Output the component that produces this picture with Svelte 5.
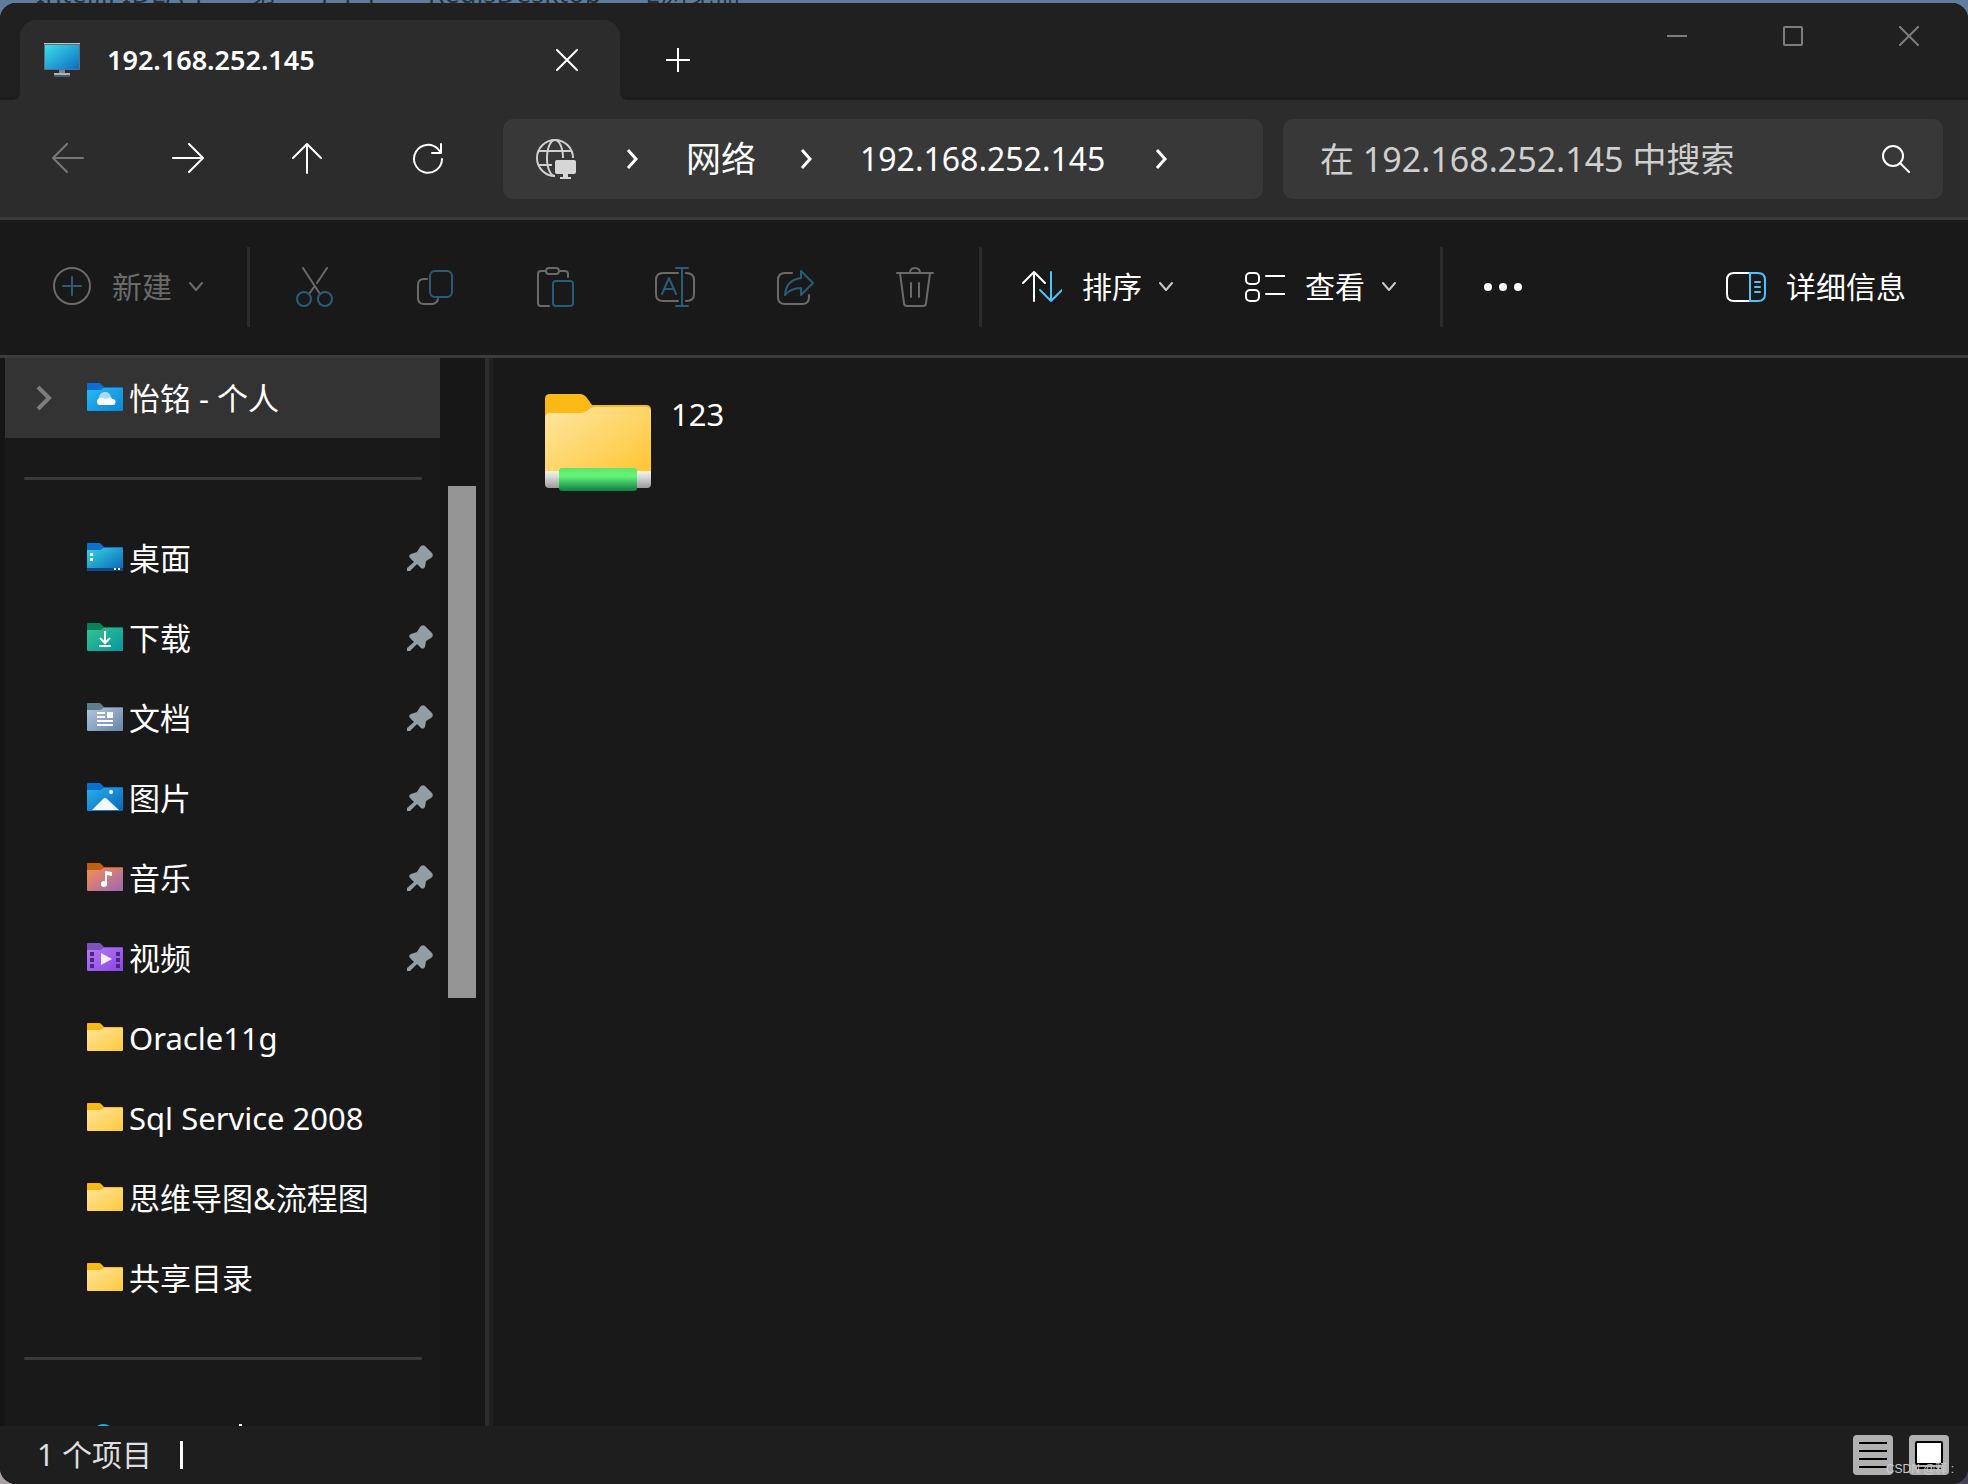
<script lang="ts">
	type Place = { name: string; kind: string; top: string; from: string; to: string; pinned: boolean };

	const places: Place[] = [
		{ name: '桌面', kind: 'desktop', top: '#0f6fcb', from: '#33d6e4', to: '#0b62b8', pinned: true },
		{ name: '下载', kind: 'downloads', top: '#0b7f5b', from: '#33c58a', to: '#0595a5', pinned: true },
		{ name: '文档', kind: 'documents', top: '#5f7c8c', from: '#b3c6dd', to: '#6685a8', pinned: true },
		{ name: '图片', kind: 'pictures', top: '#0a6fd0', from: '#27b1ec', to: '#0866b8', pinned: true },
		{ name: '音乐', kind: 'music', top: '#c0600f', from: '#f78d53', to: '#9c67b5', pinned: true },
		{ name: '视频', kind: 'videos', top: '#7c52bd', from: '#b57bf5', to: '#8a44e6', pinned: true },
		{ name: 'Oracle11g', kind: 'folder', top: '#fbb917', from: '#ffe49a', to: '#ffc93d', pinned: false },
		{ name: 'Sql Service 2008', kind: 'folder', top: '#fbb917', from: '#ffe49a', to: '#ffc93d', pinned: false },
		{ name: '思维导图&流程图', kind: 'folder', top: '#fbb917', from: '#ffe49a', to: '#ffc93d', pinned: false },
		{ name: '共享目录', kind: 'folder', top: '#fbb917', from: '#ffe49a', to: '#ffc93d', pinned: false }
	];

	const personal: Place = {
		name: '怡铭 - 个人',
		kind: 'cloud',
		top: '#0a6fd0',
		from: '#29b9f2',
		to: '#0a86d8',
		pinned: false
	};

	const files = ['123'];

	const behind = ['IntelliJ IDEA 1', '第', 'P P P', 'RedisDesktop', 'E浏览器'];
</script>

{#snippet folder(p: Place, id: string)}
	<svg class="folder" width="36" height="28" viewBox="0 0 36 28" aria-hidden="true">
		<defs>
			<linearGradient {id} x1="0" y1="0" x2="1" y2="1">
				<stop offset="0" stop-color={p.from} />
				<stop offset="1" stop-color={p.to} />
			</linearGradient>
		</defs>
		<path d="M0 1q0-1 1-1h11q2 0 3 2l2 2h18q1 0 1 1v12H0z" fill={p.top} />
		<path d="M0 7h13q2 0 3-2h19q1 0 1 1v21q0 1-1 1H1q-1 0-1-1z" fill="url(#{id})" />
		{#if p.kind === 'cloud'}
			<path d="M12 16a6 6 0 0 1 12-2l3 4z" fill="#a8dbf7" />
			<path d="M12 22a4 4 0 0 1 0-7q3-1 6 1l5-1q2 1 3 1a3 3 0 0 1-1 6z" fill="#fff" />
		{:else if p.kind === 'desktop'}
			<path d="M0 25h36v2q0 1-1 1H1q-1 0-1-1z" fill="#0d4a80" />
			<path d="M3 10h3v3H3zM3 15h3v3H3zM27 25h2v2h-2zM31 25h2v2h-2z" fill="#fff" />
		{:else if p.kind === 'downloads'}
			<path d="M18 8v12M13 15l5 5 5-5M12 23h12" fill="none" stroke="#fff" stroke-width="2" />
		{:else if p.kind === 'documents'}
			<path d="M10 9h8v2h-8zM10 13h8v2h-8zM20 9h6v6h-6zM10 17h16v2H10zM10 21h16v2H10z" fill="#fff" />
		{:else if p.kind === 'pictures'}
			<path d="M5 27L16 16q2-2 4 0l12 11z" fill="#f4f9ff" />
			<circle cx="24" cy="9" r="2" fill="#fff" />
		{:else if p.kind === 'music'}
			<circle cx="17" cy="21" r="3" fill="#fff" />
			<path d="M18 21V8l7 1v4l-5-1v9z" fill="#fff" />
		{:else if p.kind === 'videos'}
			<path
				d="M3 9h4v4H3zM3 15h4v4H3zM3 21h4v4H3zM29 9h4v4h-4zM29 15h4v4h-4zM29 21h4v4h-4z"
				fill="#4a2a78"
			/>
			<path d="M14 10v12l11-6z" fill="#f3ecfc" />
		{/if}
	</svg>
{/snippet}

{#snippet down()}
	<svg class="line down" width="14" height="10" viewBox="0 0 14 10" aria-hidden="true">
		<path d="M1 1l6 7 6-7" />
	</svg>
{/snippet}

{#snippet crumb()}
	<svg class="crumb" width="12" height="22" viewBox="0 0 12 22" aria-hidden="true">
		<path d="M2 2l8 9-8 9" />
	</svg>
{/snippet}

<div class="desktop">
	<div class="behind" aria-hidden="true">
		{#each behind as label}
			<span>{label}</span>
		{/each}
	</div>

	<main class="window">
		<header class="titlebar">
			<div class="tab">
				<svg width="36" height="34" viewBox="0 0 36 34" aria-hidden="true">
					<defs>
						<linearGradient id="screen" x1="0" y1="0" x2="1" y2="1">
							<stop offset="0" stop-color="#3ce0ea" />
							<stop offset="1" stop-color="#0b6cc4" />
						</linearGradient>
					</defs>
					<rect width="36" height="27" rx="1" fill="#5c7180" />
					<path d="M0 0h36v1H0z" fill="#b9c4cc" />
					<rect x="1" y="2" width="34" height="24" fill="url(#screen)" />
					<path d="M15 27h6v4h-6z" fill="#7a8791" />
					<path d="M10 30h16v2H10z" fill="#aab4bb" />
					<path d="M10 32h16v2H10z" fill="#4e5a63" />
				</svg>
				<h1>192.168.252.145</h1>
				<button type="button" class="close-tab" aria-label="关闭标签页">
					<svg class="line" width="22" height="22" viewBox="0 0 22 22"><path d="M1 1l20 20M21 1L1 21" /></svg>
				</button>
			</div>
			<button type="button" class="new-tab" aria-label="新建标签页">
				<svg class="line" width="24" height="24" viewBox="0 0 24 24"><path d="M12 0v24M0 12h24" /></svg>
			</button>
			<div class="window-controls">
				<button type="button" aria-label="最小化">
					<svg class="line" width="20" height="20" viewBox="0 0 20 20"><path d="M0 10h20" /></svg>
				</button>
				<button type="button" aria-label="最大化">
					<svg class="line" width="20" height="20" viewBox="0 0 20 20"><rect x="1" y="1" width="18" height="18" rx="1" /></svg>
				</button>
				<button type="button" aria-label="关闭">
					<svg class="line" width="20" height="20" viewBox="0 0 20 20"><path d="M0 0l20 20M20 0L0 20" /></svg>
				</button>
			</div>
		</header>

		<div class="navbar">
			<div class="history">
				<button type="button" aria-label="后退" disabled>
					<svg class="line" width="32" height="32" viewBox="0 0 32 32"><path d="M31 15H2M15 1L1 15l14 14" /></svg>
				</button>
				<button type="button" aria-label="前进">
					<svg class="line" width="32" height="32" viewBox="0 0 32 32"><path d="M1 15h29M17 1l14 14-14 14" /></svg>
				</button>
				<button type="button" aria-label="向上">
					<svg class="line" width="32" height="32" viewBox="0 0 32 32"><path d="M15 30V1M1 15L15 1l14 14" /></svg>
				</button>
				<button type="button" aria-label="刷新">
					<svg class="line" width="32" height="32" viewBox="0 0 32 32">
						<path d="M30 16A14 14 0 1 1 26 6l3 4M29 1v9h-9" />
					</svg>
				</button>
			</div>

			<nav class="address" aria-label="地址">
				<svg class="globe" width="40" height="40" viewBox="0 0 40 40" aria-hidden="true">
					<g fill="none" stroke="#cfcfcf" stroke-width="2">
						<path d="M37 19A18 18 0 1 0 19 37" />
						<path d="M27 19C27 8 23 1 19 1S11 8 11 19s4 18 8 18" />
						<path d="M3 12h32M3 26h13" />
					</g>
					<rect x="19" y="21" width="21" height="14" rx="2" fill="#d6d6d6" />
					<path d="M27 35h5v3h3v2H24v-2h3z" fill="#d6d6d6" />
				</svg>
				{@render crumb()}
				<a href="#network">网络</a>
				{@render crumb()}
				<a href="#host">192.168.252.145</a>
				{@render crumb()}
			</nav>

			<label class="search">
				<input type="search" placeholder="在 192.168.252.145 中搜索" aria-label="搜索" />
				<svg class="line" width="28" height="28" viewBox="0 0 28 28" aria-hidden="true">
					<circle cx="11" cy="11" r="10" /><path d="M18 18l9 9" />
				</svg>
			</label>
		</div>

		<div class="toolbar" role="toolbar" aria-label="命令">
			<button type="button" class="command" disabled>
				<svg class="line" width="40" height="40" viewBox="0 0 40 40" aria-hidden="true">
					<circle cx="20" cy="19" r="18" /><path class="blue" d="M20 10v18M11 19h18" />
				</svg>
				<span>新建</span>
				{@render down()}
			</button>
			<span class="divider"></span>
			<div class="tools">
				<button type="button" aria-label="剪切" disabled>
					<svg class="line" width="40" height="40" viewBox="0 0 40 40">
						<path d="M8 1l17 26M32 1L22 16M19 20l-5 7" />
						<circle class="blue" cx="9" cy="32" r="7" /><circle class="blue" cx="30" cy="32" r="7" />
					</svg>
				</button>
				<button type="button" aria-label="复制" disabled>
					<svg class="line" width="40" height="40" viewBox="0 0 40 40">
						<path d="M12 12H9q-6 0-6 6v13q0 6 6 6h7q6 0 7-5" />
						<rect class="blue" x="15" y="4" width="22" height="26" rx="5" />
					</svg>
				</button>
				<button type="button" aria-label="粘贴" disabled>
					<svg class="line" width="40" height="40" viewBox="0 0 40 40">
						<path d="M11 4H6q-3 0-3 3v29q0 3 3 3h8M24 4h6q3 0 3 3v3" />
						<rect x="11" y="1" width="13" height="6" rx="3" />
						<rect class="blue" x="18" y="14" width="20" height="25" rx="3" />
					</svg>
				</button>
				<button type="button" aria-label="重命名" disabled>
					<svg class="line" width="40" height="40" viewBox="0 0 40 40">
						<path d="M23 6H8q-7 0-7 7v14q0 7 7 7h15M31 6q8 0 8 7v14q0 7-8 7" />
						<path class="blue" d="M27 2v37M21 1h12M21 39h12M7 27l7-16 7 16M9 22h10" />
					</svg>
				</button>
				<button type="button" aria-label="共享" disabled>
					<svg class="line" width="40" height="40" viewBox="0 0 40 40">
						<path d="M17 6h-7q-7 0-7 7v17q0 7 7 7h17q7 0 7-7v-2" />
						<path class="blue" d="M26 4l12 12-12 12v-7q-10 0-16 7 1-15 16-17z" />
					</svg>
				</button>
				<button type="button" aria-label="删除" disabled>
					<svg class="line" width="40" height="40" viewBox="0 0 40 40">
						<path d="M2 6h36M5 6l4 30q0 3 3 3h16q3 0 3-3l4-30M15 6q0-5 5-5t5 5M16 16v14M24 16v14" />
					</svg>
				</button>
			</div>
			<span class="divider"></span>
			<div class="menus">
				<button type="button" class="command">
					<svg class="line" width="40" height="40" viewBox="0 0 40 40" aria-hidden="true">
						<path d="M12 34V5M1 16L12 5l11 11" />
						<path class="blue" d="M29 5v29M18 23l11 11 11-11" />
					</svg>
					<span>排序</span>
					{@render down()}
				</button>
				<button type="button" class="command">
					<svg class="line" width="40" height="40" viewBox="0 0 40 40" aria-hidden="true">
						<rect x="1" y="6" width="13" height="11" rx="4" />
						<rect x="1" y="23" width="13" height="11" rx="4" />
						<path d="M21 9h19M21 27h19" />
					</svg>
					<span>查看</span>
					{@render down()}
				</button>
			</div>
			<span class="divider"></span>
			<button type="button" class="more" aria-label="查看更多">
				<svg width="40" height="10" viewBox="0 0 40 10">
					<g fill="#fff"><circle cx="5" cy="5" r="4" /><circle cx="20" cy="5" r="4" /><circle cx="35" cy="5" r="4" /></g>
				</svg>
			</button>
			<button type="button" class="command details">
				<svg class="line" width="40" height="40" viewBox="0 0 40 40" aria-hidden="true">
					<path d="M23 6H8q-7 0-7 7v14q0 7 7 7h15" />
					<path class="blue" d="M24 6h8q7 0 7 7v14q0 7-7 7h-8zM29 15h5M29 20h5M29 25h5" />
				</svg>
				<span>详细信息</span>
			</button>
		</div>

		<div class="body">
			<aside class="sidebar">
				<nav class="tree" aria-label="导航窗格">
					<a class="place selected" href="#personal">
						<svg class="expand" width="16" height="26" viewBox="0 0 16 26" aria-hidden="true">
							<path d="M2 2l11 11L2 24" />
						</svg>
						{@render folder(personal, 'personal')}
						<span>{personal.name}</span>
					</a>
					<hr />
					{#each places as place, i}
						<a class="place" href="#{place.kind}-{i}">
							{@render folder(place, `place-${i}`)}
							<span>{place.name}</span>
							{#if place.pinned}
								<svg class="pin" width="26" height="26" viewBox="0 0 26 26" aria-label="已固定">
									<path d="M13 2q2-3 5-1l7 7q2 3-1 5l-5 3-1 6q-2 3-4 1l-4-4-7 7H0v-3l7-6-4-4q-2-3 1-4l6-2z" />
								</svg>
							{/if}
						</a>
					{/each}
					<hr />
					<!-- next row starts just above the status bar -->
					<svg class="peek" width="160" height="2" viewBox="0 0 160 2" aria-hidden="true">
						<path d="M10 2q6-4 13 0z" fill="#1fb0ea" />
						<path d="M152 0h3v2h-3z" fill="#fff" />
					</svg>
				</nav>
				<div class="scrollbar"><div class="thumb"></div></div>
			</aside>

			<section class="content" aria-label="文件">
				{#each files as file}
					<a class="share" href="#{file}">
						<svg width="106" height="98" viewBox="0 0 106 98" aria-hidden="true">
							<defs>
								<linearGradient id="front" x1="0" y1="0" x2="1" y2="1">
									<stop offset="0" stop-color="#ffe6a2" />
									<stop offset="1" stop-color="#ffc52f" />
								</linearGradient>
								<linearGradient id="pipe" x1="0" y1="0" x2="0" y2="1">
									<stop offset="0" stop-color="#fff3da" />
									<stop offset="0.3" stop-color="#dedede" />
									<stop offset="1" stop-color="#9a9a9a" />
								</linearGradient>
								<linearGradient id="green" x1="0" y1="0" x2="0" y2="1">
									<stop offset="0" stop-color="#5ce66c" />
									<stop offset="0.35" stop-color="#66f578" />
									<stop offset="1" stop-color="#0d7c43" />
								</linearGradient>
							</defs>
							<path d="M0 5q0-5 5-5h30q4 0 7 4l5 7h54q5 0 5 5v14H0z" fill="#fbb917" />
							<path d="M0 24q0-5 5-5h31q4 0 7-3 3-3 6-3h52q5 0 5 5v64H0z" fill="url(#front)" />
							<path d="M0 77h106v13q0 4-4 4H4q-4 0-4-4z" fill="url(#pipe)" />
							<rect x="14" y="74" width="78" height="23" rx="3" fill="url(#green)" />
						</svg>
						<span>{file}</span>
					</a>
				{/each}
			</section>
		</div>

		<footer class="status">
			<span class="count">{files.length} 个项目</span>
			<span class="caret"></span>
			<div class="views">
				<button type="button" aria-label="详细信息视图">
					<svg width="40" height="40" viewBox="0 0 40 40">
						<rect width="40" height="40" rx="4" fill="#b0b0b0" />
						<path d="M6 8h28M6 16h28M6 24h28M6 32h28" stroke="#000" stroke-width="2" />
					</svg>
				</button>
				<button type="button" aria-label="大图标视图">
					<svg width="40" height="40" viewBox="0 0 40 40">
						<rect width="40" height="40" rx="4" fill="#b0b0b0" />
						<rect x="7" y="7" width="26" height="22" rx="1" fill="#fff" stroke="#000" stroke-width="2" />
						<path d="M8 33h24" stroke="#000" stroke-width="2" />
					</svg>
				</button>
			</div>
			<small class="watermark">CSDN @释 :</small>
		</footer>
	</main>
</div>

<style>
	.desktop {
		display: flex;
		flex-direction: column;
		height: 100vh;
		background:
			linear-gradient(#5f7d9b, #5f7d9b) top / 100% 50% no-repeat,
			linear-gradient(to right, #a8a2a6, #45405a);
		font-family: 'Noto Sans', 'Noto Sans CJK SC', sans-serif;
		font-size: 30px;
		line-height: 40px;
		color: #fff;
	}

	.desktop *,
	.desktop {
		box-sizing: border-box;
	}

	/* sliver of the desktop icon labels above the window */
	.behind {
		display: flex;
		align-items: flex-end;
		gap: 44px;
		height: 3px;
		padding-left: 36px;
		overflow: hidden;
		color: #27313d;
		font-size: 27px;
		line-height: 20px;
		white-space: nowrap;
	}

	.window {
		flex: 1;
		min-height: 0;
		display: flex;
		flex-direction: column;
		position: relative;
		overflow: hidden;
		border-radius: 16px;
		background: #191919;
	}

	button {
		display: flex;
		align-items: center;
		margin: 0;
		padding: 0;
		border: 0;
		background: none;
		color: inherit;
		font: inherit;
	}

	a {
		color: inherit;
		text-decoration: none;
	}

	svg {
		display: block;
		flex: none;
	}

	.line {
		fill: none;
		stroke: currentColor;
		stroke-width: 2;
		stroke-linecap: round;
		stroke-linejoin: round;
	}

	.titlebar {
		display: flex;
		height: 97px;
		padding-left: 20px;
		background: #202020;
		box-shadow: inset 0 -3px #1c1c1c;
	}

	.tab {
		position: relative;
		display: flex;
		align-items: center;
		width: 600px;
		margin-top: 17px;
		padding: 0 42px 0 24px;
		border-radius: 16px 16px 0 0;
		background: #2c2c2c;
	}

	/* flared feet of the active tab */
	.tab::before,
	.tab::after {
		content: '';
		position: absolute;
		bottom: 0;
		width: 8px;
		height: 8px;
	}

	.tab::before {
		right: 100%;
		background: radial-gradient(circle at 0 0, transparent 8px, #2c2c2c 8px);
	}

	.tab::after {
		left: 100%;
		background: radial-gradient(circle at 100% 0, transparent 8px, #2c2c2c 8px);
	}

	.tab h1 {
		margin: 0 0 0 27px;
		font-size: 27px;
		font-weight: 600;
		line-height: 40px;
	}

	.close-tab {
		margin-left: auto;
	}

	.new-tab {
		margin: 17px 0 0 46px;
	}

	.window-controls {
		display: flex;
		gap: 96px;
		height: 66px;
		margin-left: auto;
		padding-right: 49px;
		color: #7d7d7d;
	}

	.navbar {
		display: flex;
		align-items: center;
		height: 120px;
		padding: 0 25px 0 52px;
		border-bottom: 3px solid #393939;
		background: #2c2c2c;
	}

	.history {
		display: flex;
		gap: 88px;
		margin-right: 59px;
	}

	.history button:disabled {
		color: #777;
	}

	.address,
	.search {
		display: flex;
		align-items: center;
		height: 80px;
		border-radius: 10px;
		background: #383838;
	}

	.address {
		flex: 1;
		padding-left: 33px;
		font-size: 32px;
	}

	.globe {
		margin-right: 50px;
	}

	.address a {
		margin: 0 50px 0 48px;
	}

	.address a:first-of-type {
		margin-right: 44px;
		font-size: 35px;
	}

	.crumb {
		fill: none;
		stroke: #fff;
		stroke-width: 3;
	}

	.search {
		flex: 0 1 660px;
		margin-left: 20px;
		padding: 0 33px 0 37px;
	}

	.search input {
		flex: 1;
		min-width: 0;
		padding: 0;
		border: 0;
		outline: 0;
		background: none;
		color: #fff;
		font: inherit;
		font-size: 34px;
	}

	.search input::placeholder {
		color: #cfcfcf;
		opacity: 1;
	}

	.toolbar {
		display: flex;
		align-items: center;
		height: 138px;
		padding: 0 62px 1px 52px;
		border-bottom: 3px solid #3b3b3b;
	}

	.command span {
		margin: 0 17px 0 20px;
	}

	.command:disabled,
	.tools button:disabled {
		color: #6a6a6a;
	}

	.menus .down {
		color: #c8c8c8;
	}

	.blue {
		stroke: #4cc2ff;
	}

	:disabled .blue {
		stroke: #2a5b75;
	}

	.divider {
		width: 3px;
		height: 80px;
		margin: 0 40px 0 44px;
		background: #2b2b2b;
	}

	.tools {
		display: flex;
		gap: 80px;
		margin-left: 5px;
	}

	.menus {
		display: flex;
		gap: 72px;
	}

	.details {
		margin-left: auto;
	}

	.command.details span {
		margin-right: 0;
	}

	.body {
		flex: 1;
		min-height: 0;
		display: flex;
	}

	.sidebar {
		display: flex;
		width: 493px;
		overflow: hidden;
		border-left: 5px solid #141414;
		border-right: 4px solid #202020;
		box-shadow: inset -4px 0 #2c2c2c;
	}

	.tree {
		flex: 1;
		min-width: 0;
	}

	.place {
		display: flex;
		align-items: center;
		height: 80px;
		padding: 0 7px 0 82px;
		font-size: 31px;
	}

	.place span {
		margin-left: 6px;
		white-space: nowrap;
	}

	.place .folder {
		margin-bottom: 2px;
	}

	.selected {
		padding-left: 31px;
		background: #333;
	}

	.expand {
		margin-right: 35px;
		fill: none;
		stroke: #7d7d7d;
		stroke-width: 4;
	}

	.pin {
		margin-left: auto;
		fill: #929da4;
	}

	.tree hr {
		height: 3px;
		margin: 39px 18px 38px 19px;
		border: 0;
		border-radius: 2px;
		background: #3a3a3a;
	}

	.peek {
		margin: -12px 0 0 82px;
	}

	.tree hr:last-of-type {
		margin-bottom: 76px;
	}

	.scrollbar {
		width: 45px;
		margin-right: 4px;
		padding: 128px 8px 0;
		background: #171717;
	}

	.thumb {
		width: 28px;
		height: 512px;
		background: #959595;
	}

	.content {
		flex: 1;
		padding: 36px 52px;
	}

	.share {
		display: inline-flex;
		align-items: flex-start;
		gap: 20px;
		font-size: 31px;
	}

	.status {
		display: flex;
		align-items: center;
		height: 58px;
		padding: 0 19px 0 37px;
		background: #1e1e1e;
		color: #dedede;
	}

	.caret {
		width: 3px;
		height: 28px;
		margin-left: 28px;
		background: #fff;
	}

	.views {
		display: flex;
		gap: 16px;
		margin-left: auto;
	}

	.watermark {
		position: absolute;
		right: 14px;
		bottom: 8px;
		color: #c9c9c9;
		font-family: 'Liberation Sans', 'Noto Sans CJK SC', sans-serif;
		font-size: 12px;
		line-height: 14px;
	}
</style>
